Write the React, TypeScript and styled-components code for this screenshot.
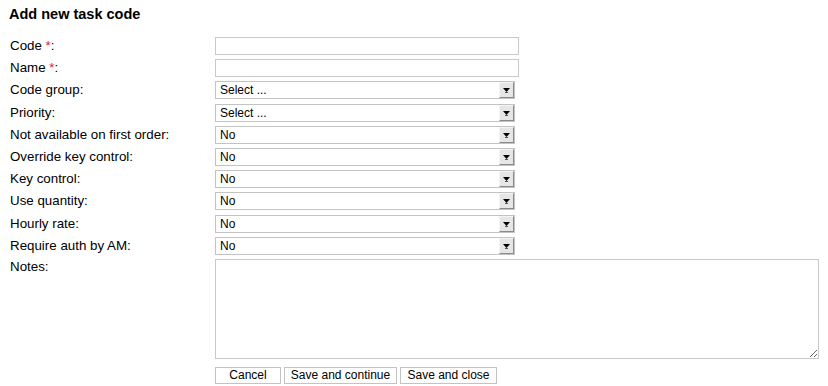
import { Fragment } from 'react';
import styled, { createGlobalStyle } from 'styled-components';

const GlobalStyle = createGlobalStyle`
  body {
    margin: 0;
    background: #fff;
    font-family: "Liberation Sans", Arial, sans-serif;
    color: #000;
  }
`;

const Page = styled.div`
  padding: 6px 10px;
`;

const Title = styled.h1`
  margin: 0 0 15px -1px;
  font-size: 14.5px;
  line-height: 16px;
  font-weight: bold;
`;

const FormGrid = styled.div`
  display: grid;
  grid-template-columns: 205px 1fr;
  row-gap: 4.2px;
  align-items: center;
`;

const Label = styled.label<{ $top?: boolean }>`
  font-size: 13.33px;
  line-height: 16px;
  align-self: ${(p) => (p.$top ? 'start' : 'center')};
`;

const Req = styled.span`
  color: #e4141b;
`;

const TextInput = styled.input`
  display: block;
  box-sizing: border-box;
  width: 304px;
  height: 18px;
  margin: 0;
  border: 1px solid #c9c9c9;
  padding: 0 3px;
  font: 11px "Liberation Sans", Arial, sans-serif;
  outline: none;
`;

const SelectBox = styled.div`
  box-sizing: border-box;
  display: flex;
  width: 300px;
  height: 18px;
  border: 1px solid #c3c3c3;
  background: #fff;
`;

const NativeSelect = styled.select`
  flex: 1;
  appearance: none;
  border: none;
  background: transparent;
  padding: 0 4px;
  margin: 0;
  font: 12px "Liberation Sans", Arial, sans-serif;
  color: #000;
  outline: none;
`;

const ArrowButton = styled.span`
  box-sizing: border-box;
  width: 15px;
  height: 16px;
  display: flex;
  align-items: center;
  justify-content: center;
  background: #e6e6e6;
  border-left: 1px solid #f4f4f4;
  border-top: 1px solid #f4f4f4;
  border-right: 1px solid #8a8a8a;
  border-bottom: 1px solid #8a8a8a;
`;

const NotesArea = styled.textarea`
  display: block;
  box-sizing: border-box;
  width: 604px;
  height: 100px;
  margin: 0;
  border: 1px solid #c9c9c9;
  font: 11px "Liberation Sans", Arial, sans-serif;
  resize: both;
  outline: none;
`;

const ButtonRow = styled.div`
  display: flex;
  gap: 3px;
  margin: 8px 0 0 205px;
`;

const Button = styled.button<{ $w: number }>`
  box-sizing: border-box;
  width: ${(p) => p.$w}px;
  height: 17px;
  margin: 0;
  padding: 0;
  border: 1px solid #c3c3c3;
  background: #fff;
  font: 12px "Liberation Sans", Arial, sans-serif;
  color: #000;
  line-height: 15px;
`;

const Arrow = () => (
  <svg width="7" height="6" viewBox="0 0 7 6">
    <path d="M0 1h7L3.5 5z" fill="#000" />
    <rect x="2" y="5" width="3" height="1" fill="#555" />
  </svg>
);

const Select = ({ value }: { value: string }) => (
  <SelectBox>
    <NativeSelect defaultValue={value}>
      <option>{value}</option>
    </NativeSelect>
    <ArrowButton>
      <Arrow />
    </ArrowButton>
  </SelectBox>
);

const selects: [string, string][] = [
  ['Code group:', 'Select ...'],
  ['Priority:', 'Select ...'],
  ['Not available on first order:', 'No'],
  ['Override key control:', 'No'],
  ['Key control:', 'No'],
  ['Use quantity:', 'No'],
  ['Hourly rate:', 'No'],
  ['Require auth by AM:', 'No'],
];

export default function App() {
  return (
    <Page>
      <GlobalStyle />
      <Title>Add new task code</Title>
      <FormGrid>
        <Label>
          Code <Req>*</Req>:
        </Label>
        <TextInput />
        <Label>
          Name <Req>*</Req>:
        </Label>
        <TextInput />
        {selects.map(([label, value]) => (
          <Fragment key={label}>
            <Label>{label}</Label>
            <Select value={value} />
          </Fragment>
        ))}
        <Label $top>Notes:</Label>
        <NotesArea />
      </FormGrid>
      <ButtonRow>
        <Button $w={66}>Cancel</Button>
        <Button $w={113}>Save and continue</Button>
        <Button $w={97}>Save and close</Button>
      </ButtonRow>
    </Page>
  );
}
